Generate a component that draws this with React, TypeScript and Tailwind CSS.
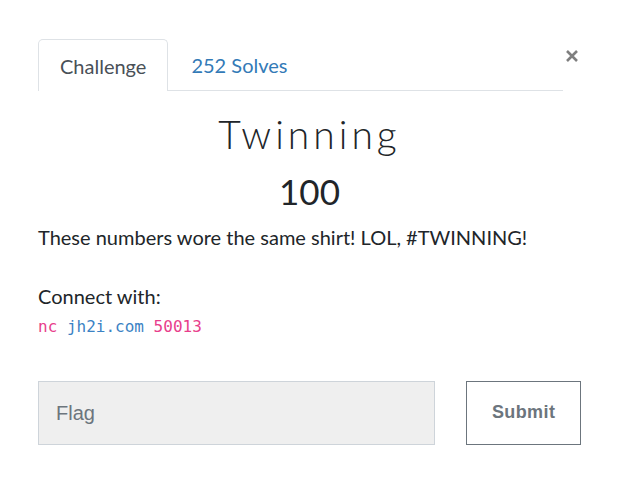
import React from "react";

export default function App() {
  return (
    <div className="relative w-[620px] h-[503px] bg-white font-['Lato',sans-serif] text-[#212529]">
      <div className="pt-[39px] pl-[38px] w-[581px]">
        <div className="flex w-[525px] h-[52px] border-b border-[#dee2e6]">
          <div className="-mb-px h-[52px] px-[21px] flex items-center border border-b-0 border-[#dee2e6] rounded-t-[5px] bg-white text-[20px] text-[#495057]">
            Challenge
          </div>
          <div className="h-[51px] px-[23px] flex items-center text-[20px] text-[#337ab7]">
            252 Solves
          </div>
        </div>
        <h1 className="mt-[20px] text-center text-[39px] leading-[1.2] font-light tracking-[4px] text-[#212529]">
          Twinning
        </h1>
        <div className="mt-[12px] text-center text-[35px] leading-[1.2] text-[#212529]">100</div>
        <p className="mt-[10px] text-[20px] leading-[30px]">These numbers wore the same shirt! LOL, #TWINNING!</p>
        <p className="mt-[29px] text-[20px] leading-[30px]">Connect with:</p>
        <p className="mt-[4px] text-[16px] leading-[24px] font-['DejaVu_Sans_Mono',monospace]">
          <span className="text-[#e83e8c]">nc</span>{" "}
          <span className="text-[#3b82c4]">jh2i.com</span>{" "}
          <span className="text-[#e83e8c]">50013</span>
        </p>
        <div className="mt-[42px] flex gap-[31px]">
          <div className="w-[398px] h-[64px] bg-[#efefef] border border-[#ced4da] flex items-center pl-[17px] font-['Liberation_Sans',sans-serif] text-[20px] text-[#6c757d]">
            Flag
          </div>
          <button className="w-[115px] h-[64px] border border-[#6c757d] bg-white text-[#6c757d] font-bold text-[18px] tracking-[0.4px] font-['Liberation_Sans',sans-serif]">
            Submit
          </button>
        </div>
      </div>
      <button className="absolute left-[564px] top-[48px] w-[16px] h-[16px] flex items-center justify-center">
        <svg width="14" height="14" viewBox="0 0 14 14">
          <path d="M2 2L12 12M12 2L2 12" stroke="#7f7f7f" strokeWidth="2.6" strokeLinecap="butt" />
        </svg>
      </button>
    </div>
  );
}
